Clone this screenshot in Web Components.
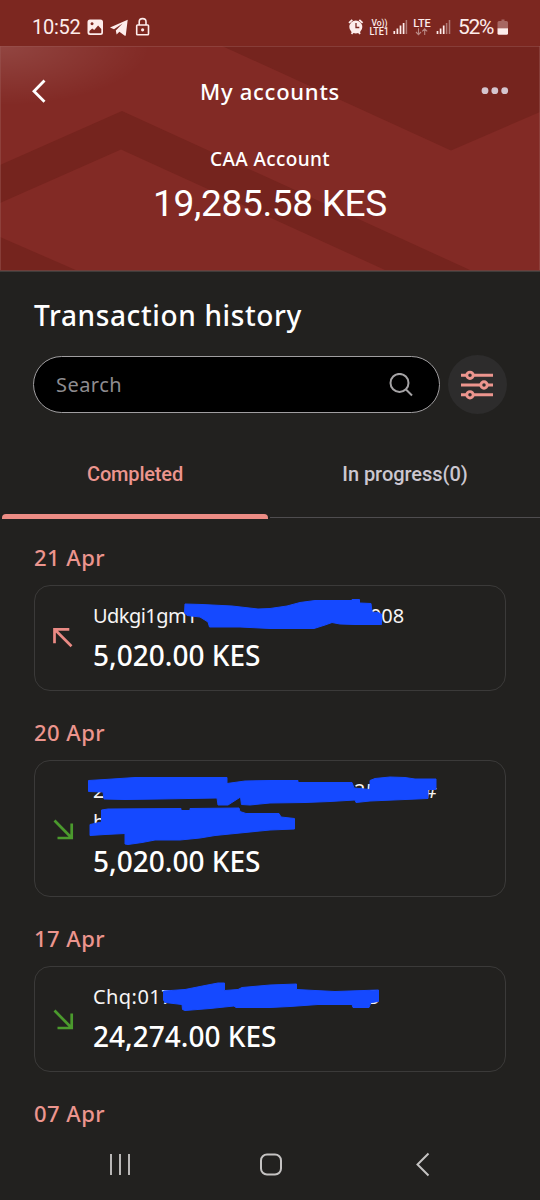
<!DOCTYPE html>
<html lang="en">
<head>
<meta charset="utf-8">
<title>My accounts</title>
<style>
html,body{margin:0;background:#22211f}
body{width:540px;height:1200px;overflow:hidden;font-family:"Noto Sans","Open Sans",sans-serif;color:#fff}
</style>
</head>
<body>
<bank-screen></bank-screen>
<script>
const define=(name,html,after)=>customElements.define(name,class extends HTMLElement{
  constructor(){super();this.attachShadow({mode:"open"});}
  connectedCallback(){
    this.shadowRoot.innerHTML=typeof html==="function"?html(this):html;
    if(after)after(this);
  }
});

/* Text label whose tracking is adjusted so that it spans the given width. */
define("ui-label",'<style>:host{display:block;white-space:pre}span{display:inline-block}</style><span><slot></slot></span>',el=>{
  const s=el.shadowRoot.querySelector("span"),w=parseFloat(el.getAttribute("fit"));
  if(!w)return;
  const n=[...el.textContent].length;
  const d=(w-s.getBoundingClientRect().width)/n;
  s.style.letterSpacing=d.toFixed(3)+"px";
});

define("status-bar",`<style>
:host{display:flex;height:46px;box-sizing:border-box;padding:0 31px 0 32px;align-items:center;background:#7c2720;color:#fdeceb;font-family:Roboto,sans-serif}
svg{display:block}
ui-label{line-height:46px;margin-top:8px}
.t{font-size:20px}.p{font-size:21px;margin-left:7px}
.l{margin:8px auto 0 6.500px}.r{margin-top:8px}.b{margin:8px 0 0 4px}
</style>
<ui-label class="t" fit="48.5">10:52</ui-label>
<svg class="l" width="64" height="20" viewBox="88 17 64 20" fill="none">
<path fill="#fdeceb" fill-rule="evenodd" d="M91 19.5h10.500q2.500 0 2.500 2.500v10.500q0 2.500-2.500 2.500H91q-2.500 0-2.500-2.500V22q0-2.500 2.500-2.500zM90.400 31v1.500q0 .800.800.800h10.300q.800 0 .800-.800v-3.400l-3.200-3.500-3.900 4.500-2-1.700zM93 22.300a1.500 1.500 0 1 0 .1 0z"/>
<path fill="#fdeceb" d="M111 27.600 128.700 19.800 126.800 35.300q-.200.800-1 .400L120.400 31.700 117.600 34.600 116.800 30.400 123.500 23.600 115 29.200z"/>
<rect x="137.700" y="25" width="11.800" height="9.700" rx=".8" stroke="#fdeceb" stroke-width="1.600"/><path d="M140.200 25v-3.200q0-3.200 3.400-3.200t3.400 3.200V25" stroke="#fdeceb" stroke-width="1.600"/><circle cx="143.600" cy="29.800" r="1.600" fill="#fdeceb"/>
</svg>
<svg class="r" width="103" height="20" viewBox="349 17 103 20" font-family="Roboto,sans-serif" fill="#fdeceb">
<circle cx="356.800" cy="27" r="6.500"/><path d="M350 22.800l3.300-3M363.600 22.800l-3.300-3M352.500 33.800l1.700-2M361.100 33.800l-1.700-2" stroke="#fdeceb" stroke-width="1.800"/><path d="M357 23v4.500h3.300" fill="none" stroke="#7c2720" stroke-width="1.300"/>
<text x="372.500" y="26" font-size="9.500" textLength="16" font-weight="500" lengthAdjust="spacingAndGlyphs">Vo))</text><text x="370.500" y="35" font-size="10" textLength="19.500" font-weight="500" lengthAdjust="spacingAndGlyphs">LTE1</text>
<path d="M395.300 34v-3M398.400 34v-5.500M401.500 34v-8.500M404.600 34V23M438.500 34v-3M441.600 34v-5.500M444.700 34v-8.500" stroke="#fdeceb" stroke-width="1.700"/>
<path d="M407.400 34V20M447.600 34V23M450.500 34V20" stroke="#b07b77" stroke-width="1.500"/>
<text x="414.300" y="26.900" font-size="10.500" textLength="17.500" font-weight="500" lengthAdjust="spacingAndGlyphs">LTE</text>
<path d="M419.500 28.300v6M417 32l2.500 2.600 2.500-2.600M425.700 35v-6M423.200 31.400l2.500-2.600 2.500 2.600" stroke="#b98884" fill="none" stroke-width="1.100"/>
</svg>
<ui-label class="p" fit="35">52%</ui-label>
<svg class="b" width="12" height="18" viewBox="497 18 12 18"><path d="M499.500 21h2v-1.500h3V21h2q1.500 0 1.500 1.500v5.700h-10.500v-5.700q0-1.500 1.500-1.500z" fill="#a76762"/><path d="M497.500 28.300h10.500v5q0 1.500-1.500 1.500H499q-1.500 0-1.500-1.500z" fill="#fdeceb"/></svg>`);

define("account-header",`<style>
:host{display:grid;height:226px;overflow:hidden;background:#822a25}
svg{display:block}
.art,.c{grid-area:1/1}
.c{display:grid;grid-template-rows:90px 46px 1fr;text-align:center}
nav{display:grid;grid-template-columns:60px 1fr 60px;align-items:center}
.t{font-size:22px;font-weight:500;line-height:90px}
.s{font-size:19px;font-weight:500;line-height:46px}
.a{font-family:Roboto,sans-serif;font-size:37px;line-height:44px}
</style>
<svg class="art" width="540" height="226" viewBox="0 46 540 226">
<defs><radialGradient id="g" cx="0" cy="46" r="150" gradientUnits="userSpaceOnUse" gradientTransform="translate(0 27) scale(1 .4)"><stop offset="0" stop-color="#fff" stop-opacity=".13"/><stop offset="1" stop-color="#fff" stop-opacity="0"/></radialGradient></defs>
<g fill="#75241e"><path d="M0 165 122 111 470 270H385L121 149.500 0 203z"/><path d="M0 237 78 271H0z"/><path d="M222 46 451 150.500 540 112V46z"/></g>
<rect y="46" width="300" height="90" fill="url(#g)"/>
<path d="M0 46.500H540M.500 46V270M539.500 46V270" stroke="#9a5652" stroke-opacity=".5"/><path d="M0 270.500H540" stroke="#6b3f3b"/><path d="M0 271.500H540" stroke="#403c3a"/>
</svg>
<div class="c"><nav>
<svg width="60" height="30" viewBox="0 76 60 30"><path d="M44.500 80.500 34 91.200 44.500 101.800" fill="none" stroke="#fff" stroke-width="2.800"/></svg>
<ui-label class="t" fit="140">My accounts</ui-label>
<svg width="60" height="30" viewBox="480 76 60 30" fill="#d5c5ce"><circle cx="485" cy="90.700" r="3.400"/><circle cx="494.800" cy="90.700" r="3.400"/><circle cx="504.700" cy="90.700" r="3.400"/></svg></nav>
<ui-label class="s" fit="120">CAA Account</ui-label>
<ui-label class="a" fit="234">19,285.58 KES</ui-label></div>`);

define("search-row",`<style>
:host{display:flex;gap:7.500px;padding:0 33.500px 0 33px;align-items:center;height:59px}
.f{flex:1;height:57px;box-sizing:border-box;border:1.500px solid #a09ea0;border-radius:29px;background:#000;display:flex;align-items:center;justify-content:space-between;padding:0 26px 0 22px;color:#8e8c90;font-size:20px}
.o{width:59px;height:59px;border-radius:50%;background:#2d2c2c;display:grid;place-items:center}
svg{display:block}
</style>
<div class="f"><ui-label fit="66">Search</ui-label><svg width="24" height="24" viewBox="388.500 372.500 24 24" fill="none" stroke="#a5a3a5" stroke-width="2"><circle cx="399" cy="382.400" r="9"/><path d="M405.500 389 411.500 395"/></svg></div>
<div class="o"><svg width="34" height="30" viewBox="460 370 34 30" fill="#2d2c2c" stroke="#ec958e" stroke-width="2.900"><path d="M461 375.300h32M461 385h32M461 394.800h32"/><circle cx="470" cy="375.300" r="3.200"/><circle cx="484" cy="385" r="3.200"/><circle cx="470" cy="394.800" r="3.200"/></svg></div>`);

define("history-tabs",`<style>
:host{display:grid;grid-template-columns:1fr 1fr;height:89px;font:500 20px Roboto,sans-serif;text-align:center}
div{display:grid;grid-template-rows:1fr 5px}
ui-label{line-height:88px;height:84px}
.a{color:#ec958e;padding:0 2px}.a i{background:#ec8c84;border-radius:4px 4px 0 0;height:4.500px}
.b{color:#ccc7d0}.b i{border-bottom:1px solid #4f4d4f;box-sizing:border-box;height:4px}
</style><div class="a"><ui-label fit="96">Completed</ui-label><i></i></div><div class="b"><ui-label fit="125.5">In progress(0)</ui-label><i></i></div>`);

define("day-group",el=>`<style>
:host{display:block;padding:0 34px}
ui-label{color:#ec958e;font-size:22px;font-weight:500;line-height:53px;height:54px}
</style><ui-label fit="71">${el.getAttribute("day")}</ui-label><slot></slot>`);

const arrows={
 out:'<path stroke="#ea8a84" transform="translate(0 -1.200)" d="M71.500 646.500 55 630M69.300 629.500H54.500V643.500"/>',
 in:'<path stroke="#4b9a2d" transform="translate(0 -191.500)" d="M54.500 820 71.500 837.300M57.500 837.500H71.700V823"/>'
};
define("transaction-card",el=>`<style>
:host{position:relative;display:grid;grid-template-columns:58px 1fr;box-sizing:border-box;height:${el.getAttribute("h")}px;border:1px solid #3b3a39;border-radius:16px}
.i{align-self:center;margin-left:15px}
svg{display:block}
.m{padding-top:14px}
.amt{font-size:28px;font-weight:500;line-height:49px}
.s{position:absolute;left:-1px;top:-1px}
</style>
<svg class="i" width="30" height="30" viewBox="50 622 30 30" fill="none" stroke-width="2.700">${arrows[el.getAttribute("dir")]}</svg>
<div class="m"><slot></slot><ui-label class="amt" fit="${el.getAttribute("w")}">${el.getAttribute("amount")}</ui-label></div>
<svg class="s" width="472" height="${el.getAttribute("h")}" viewBox="34 ${el.getAttribute("top")} 472 ${el.getAttribute("h")}" fill="#1549ff" stroke="#1549ff" stroke-width="1" stroke-linejoin="round"><path d="${el.getAttribute("scribble")}"/></svg>`);

/* One line of the description; every part takes its own column. */
define("desc-line",el=>`<style>:host{display:grid;grid-template-columns:${el.getAttribute("cols")};height:31px;line-height:31px;font-size:20px;color:#f7f5f5}</style><slot></slot>`);

define("nav-keys",`<style>:host{display:grid;grid-template-columns:44px 151px 151px 151px 43px;height:72px;align-items:center;justify-items:center;background:#22211f}svg{grid-row:1;display:block}</style>
<svg style="grid-column:2" width="30" height="30" viewBox="104.500 1149 30 30" stroke="#b9b7b6" stroke-width="2" fill="none"><path d="M110.500 1154v21M119.500 1154v21M128.500 1154v21"/></svg>
<svg style="grid-column:3" width="30" height="30" viewBox="255.500 1149 30 30" stroke="#c5c3c2" stroke-width="2" fill="none"><rect x="260.500" y="1154.500" width="20" height="20" rx="6"/></svg>
<svg style="grid-column:4" width="30" height="30" viewBox="406.500 1149 30 30" stroke="#c5c3c2" stroke-width="2" fill="none"><path d="M428 1153.500 417 1164.500 428 1175.500"/></svg>`);

define("bank-screen",`<style>
:host{display:flex;flex-direction:column;width:540px;height:1200px;overflow:hidden}
.h{padding:13px 0 0 34px;height:70px;font-size:28px;font-weight:500;line-height:60px}
history-tabs{margin-top:16px}
main{flex:1;padding-top:12px;display:flex;flex-direction:column;gap:15px;overflow:hidden;min-height:0}
</style>
<status-bar></status-bar><account-header></account-header>
<ui-label class="h" fit="268">Transaction history</ui-label>
<search-row></search-row><history-tabs></history-tabs>
<main>
<day-group day="21 Apr"><transaction-card h="106" top="585" dir="out" amount="5,020.00 KES" w="167.5" scribble="M185 604 202 604.500 232 606 258 609 270 608.500 287 606 300 602.500 315 600.500H352V599.500H359.500V603L371 603.500 372 612 378 612.500 381.500 614V624.500H355L340 624 332 622.500 325 625 314 628.500H270L240 627 209.500 627 208 622 200 617 187 615.500 184.500 613z">
<desc-line cols="277px 1fr"><ui-label fit="104">Udkgi1gm1</ui-label><ui-label fit="34">008</ui-label></desc-line></transaction-card></day-group>
<day-group day="20 Apr"><transaction-card h="137" top="760" dir="in" amount="5,020.00 KES" w="167.5" scribble="M88.500 780.500 105 779.500 135 777.500H227V783.500L245 781 270 780.500H298V782.500H352L354 788 370 789.500V780.500L375 778.500 390 777 405 777.500 415 779H436V789.500H428V798.500L405 799.500 370 801 356 802.500 355 800 330 801.500 305 802.500 270 803 250 805 241.500 804.500 240.500 797 228 805 218 805 217 798 160 799 125 799.500 104 799 103 792 88.500 791.500zM101.500 810 108 809 181 808.500V810.500H190V808.500L239 808 240 811.500 246 813.500H279L281 817 294.500 818.500V829L270 830 240 833 215 835.500 200 838 180 840H155L142 842.500 128 844.500 125 844V833.500L105 834.500 90 835.500V824.500L101.500 822z">
<desc-line cols="261px 70px 1fr"><ui-label>2</ui-label><ui-label fit="24">25</ui-label><ui-label>#</ui-label></desc-line><desc-line cols="1fr"><ui-label>h</ui-label></desc-line></transaction-card></day-group>
<day-group day="17 Apr"><transaction-card h="106" top="966" dir="in" amount="24,274.00 KES" w="183.5" scribble="M163.500 991 185 989.500 205 985.500 218 983 224.500 983V990.500L238 989.500 242 987.500 270 985 296.500 984V989.500L315 990.500 335 991.500 378.500 990V1001.500L371 1002.500 369 1007.500H353L352 1004.500H318L290 1006.500 270 1007.500H236L234 1006 210 1008.500 185 1010.500 182.500 1009.500 182 1004.500 165 1002.500 163.500 1000z">
<desc-line cols="275px 1fr"><ui-label fit="80">Chq:017</ui-label><ui-label>3</ui-label></desc-line></transaction-card></day-group>
<day-group day="07 Apr"></day-group>
</main>
<nav-keys></nav-keys>`);
</script>
</body>
</html>
